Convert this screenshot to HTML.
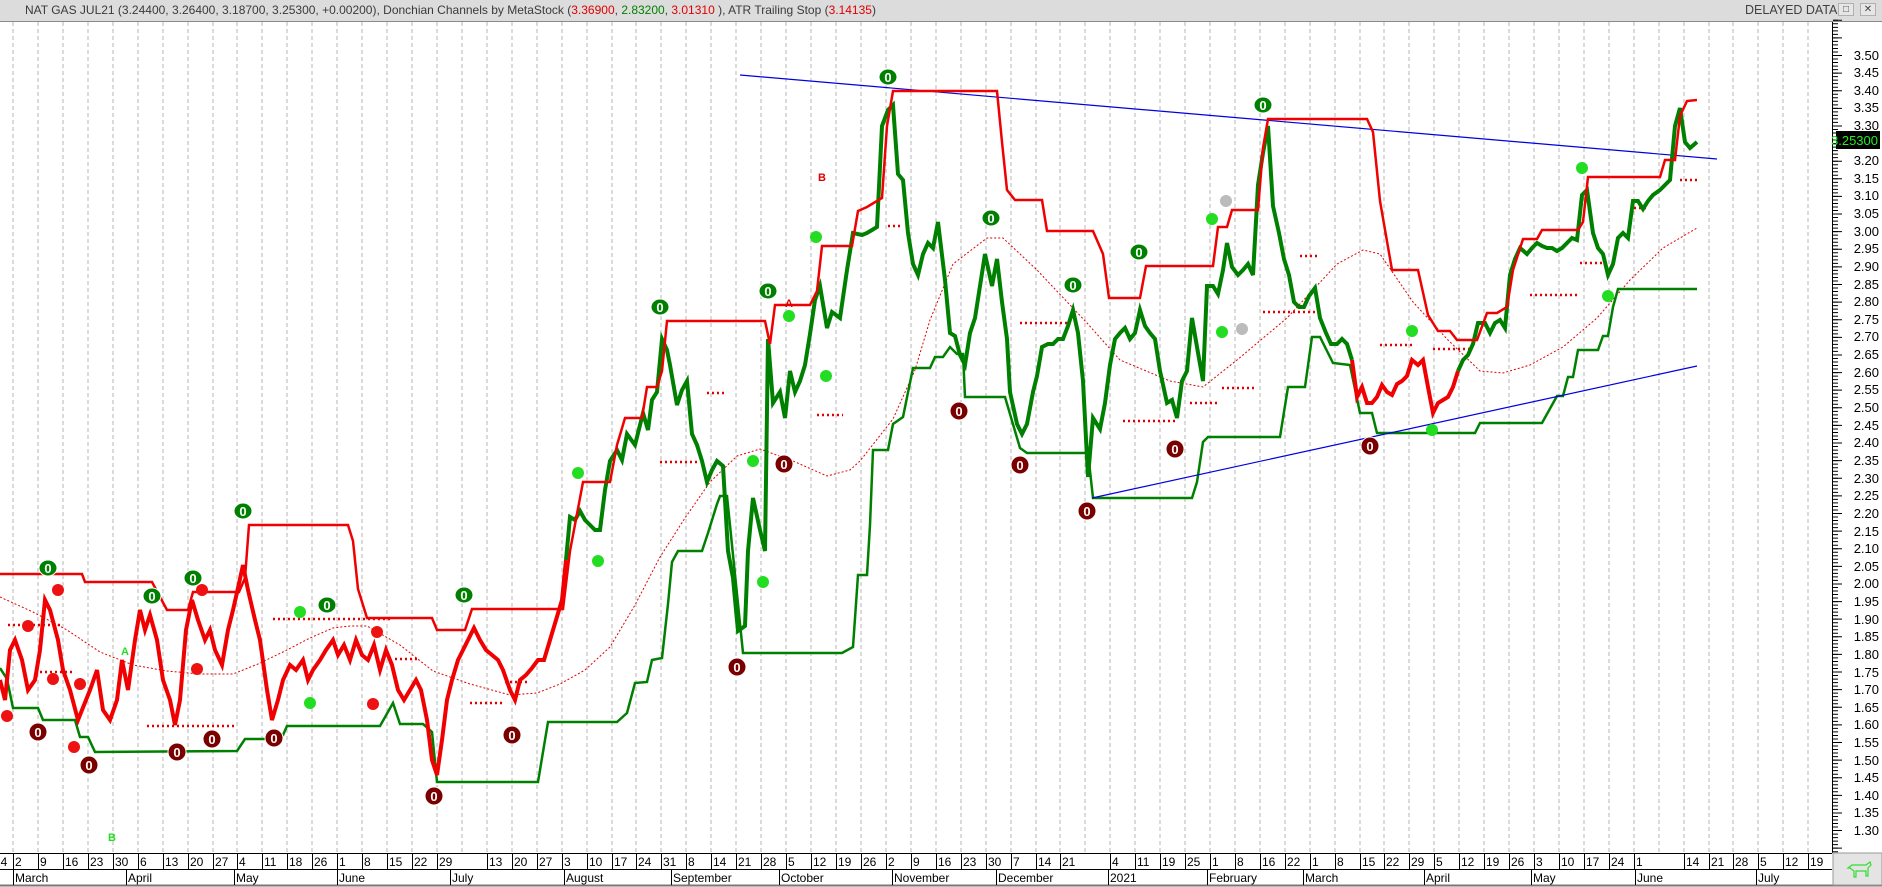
<!DOCTYPE html>
<html><head><meta charset="utf-8"><style>
html,body{margin:0;padding:0;background:#fff;}
body{width:1882px;height:887px;overflow:hidden;position:relative;font-family:"Liberation Sans",sans-serif;}
#hdr{position:absolute;left:0;top:0;width:1882px;height:21px;background:#dcdcdc;border-bottom:1px solid #8a8a8a;font-size:12px;color:#3a3a3a;line-height:20px;}
#hdr .t{position:absolute;left:25px;top:0;white-space:nowrap;}
.r{color:#e00000}.g{color:#008000}
#dd{position:absolute;left:1745px;top:0;font-size:12.5px;color:#404040;}
.btn{position:absolute;top:3px;width:16px;height:13px;background:#e6e6e6;border:1px solid #b0b0b0;box-sizing:border-box;font-size:10px;line-height:11px;text-align:center;color:#444;}
svg{position:absolute;left:0;top:0;}
</style></head><body>
<div id="hdr"><div class="t">NAT GAS JUL21 (3.24400, 3.26400, 3.18700, 3.25300, +0.00200), Donchian Channels by MetaStock (<span class="r">3.36900</span>, <span class="g">2.83200</span>, <span class="r">3.01310</span> ), ATR Trailing Stop (<span class="r">3.14135</span>)</div>
<div id="dd">DELAYED DATA</div>
<div class="btn" style="left:1838px">&#9633;</div><div class="btn" style="left:1860px">&#10005;</div>
</div>
<svg width="1882" height="887" viewBox="0 0 1882 887" style="top:0">
<g stroke="#b4b4b4" stroke-width="1" stroke-dasharray="4,3">
<line x1="13" y1="22" x2="13" y2="853"/><line x1="38" y1="22" x2="38" y2="853"/><line x1="63" y1="22" x2="63" y2="853"/><line x1="88" y1="22" x2="88" y2="853"/><line x1="113" y1="22" x2="113" y2="853"/><line x1="138" y1="22" x2="138" y2="853"/><line x1="163" y1="22" x2="163" y2="853"/><line x1="188" y1="22" x2="188" y2="853"/><line x1="213" y1="22" x2="213" y2="853"/><line x1="237" y1="22" x2="237" y2="853"/><line x1="262" y1="22" x2="262" y2="853"/><line x1="287" y1="22" x2="287" y2="853"/><line x1="312" y1="22" x2="312" y2="853"/><line x1="337" y1="22" x2="337" y2="853"/><line x1="362" y1="22" x2="362" y2="853"/><line x1="387" y1="22" x2="387" y2="853"/><line x1="412" y1="22" x2="412" y2="853"/><line x1="437" y1="22" x2="437" y2="853"/><line x1="462" y1="22" x2="462" y2="853"/><line x1="487" y1="22" x2="487" y2="853"/><line x1="512" y1="22" x2="512" y2="853"/><line x1="537" y1="22" x2="537" y2="853"/><line x1="562" y1="22" x2="562" y2="853"/><line x1="587" y1="22" x2="587" y2="853"/><line x1="612" y1="22" x2="612" y2="853"/><line x1="636" y1="22" x2="636" y2="853"/><line x1="661" y1="22" x2="661" y2="853"/><line x1="686" y1="22" x2="686" y2="853"/><line x1="711" y1="22" x2="711" y2="853"/><line x1="736" y1="22" x2="736" y2="853"/><line x1="761" y1="22" x2="761" y2="853"/><line x1="786" y1="22" x2="786" y2="853"/><line x1="811" y1="22" x2="811" y2="853"/><line x1="836" y1="22" x2="836" y2="853"/><line x1="861" y1="22" x2="861" y2="853"/><line x1="886" y1="22" x2="886" y2="853"/><line x1="911" y1="22" x2="911" y2="853"/><line x1="936" y1="22" x2="936" y2="853"/><line x1="961" y1="22" x2="961" y2="853"/><line x1="986" y1="22" x2="986" y2="853"/><line x1="1011" y1="22" x2="1011" y2="853"/><line x1="1036" y1="22" x2="1036" y2="853"/><line x1="1060" y1="22" x2="1060" y2="853"/><line x1="1085" y1="22" x2="1085" y2="853"/><line x1="1110" y1="22" x2="1110" y2="853"/><line x1="1135" y1="22" x2="1135" y2="853"/><line x1="1160" y1="22" x2="1160" y2="853"/><line x1="1185" y1="22" x2="1185" y2="853"/><line x1="1210" y1="22" x2="1210" y2="853"/><line x1="1235" y1="22" x2="1235" y2="853"/><line x1="1260" y1="22" x2="1260" y2="853"/><line x1="1285" y1="22" x2="1285" y2="853"/><line x1="1310" y1="22" x2="1310" y2="853"/><line x1="1335" y1="22" x2="1335" y2="853"/><line x1="1360" y1="22" x2="1360" y2="853"/><line x1="1384" y1="22" x2="1384" y2="853"/><line x1="1409" y1="22" x2="1409" y2="853"/><line x1="1434" y1="22" x2="1434" y2="853"/><line x1="1459" y1="22" x2="1459" y2="853"/><line x1="1484" y1="22" x2="1484" y2="853"/><line x1="1509" y1="22" x2="1509" y2="853"/><line x1="1534" y1="22" x2="1534" y2="853"/><line x1="1559" y1="22" x2="1559" y2="853"/><line x1="1584" y1="22" x2="1584" y2="853"/><line x1="1609" y1="22" x2="1609" y2="853"/><line x1="1634" y1="22" x2="1634" y2="853"/><line x1="1659" y1="22" x2="1659" y2="853"/><line x1="1684" y1="22" x2="1684" y2="853"/><line x1="1709" y1="22" x2="1709" y2="853"/><line x1="1733" y1="22" x2="1733" y2="853"/><line x1="1758" y1="22" x2="1758" y2="853"/><line x1="1783" y1="22" x2="1783" y2="853"/><line x1="1808" y1="22" x2="1808" y2="853"/>
</g>
<polyline fill="none" stroke="#e00000" stroke-width="1" stroke-dasharray="2,2" points="0,597 33,612 67,630 100,652 133,665 167,671 200,674 233,674 258,664 283,652 310,638 333,628 350,626 367,626 400,645 433,671 470,684 510,695 537,693 560,684 585,670 610,647 635,605 660,557 685,518 710,482 737,456 760,449 793,461 827,476 850,470 860,461 893,419 915,370 930,320 953,264 987,238 1003,238 1037,270 1087,323 1120,360 1170,381 1203,387 1237,360 1287,318 1337,264 1363,250 1380,254 1413,302 1447,339 1480,371 1503,373 1530,365 1563,347 1597,318 1630,280 1663,248 1697,228"/>
<g stroke="#e00000" stroke-width="2.5" stroke-dasharray="2,3">
<line x1="147" y1="726" x2="237" y2="726"/><line x1="273" y1="619" x2="390" y2="619"/><line x1="8" y1="625" x2="60" y2="625"/><line x1="40" y1="672" x2="75" y2="672"/><line x1="395" y1="659" x2="420" y2="659"/><line x1="470" y1="703" x2="505" y2="703"/><line x1="505" y1="682" x2="530" y2="682"/><line x1="660" y1="462" x2="698" y2="462"/><line x1="817" y1="415" x2="843" y2="415"/><line x1="707" y1="393" x2="725" y2="393"/><line x1="888" y1="226" x2="900" y2="226"/><line x1="1020" y1="323" x2="1070" y2="323"/><line x1="1123" y1="421" x2="1177" y2="421"/><line x1="1190" y1="403" x2="1220" y2="403"/><line x1="1222" y1="388" x2="1255" y2="388"/><line x1="1263" y1="312" x2="1317" y2="312"/><line x1="1300" y1="256" x2="1320" y2="256"/><line x1="1380" y1="345" x2="1413" y2="345"/><line x1="1433" y1="349" x2="1470" y2="349"/><line x1="1530" y1="295" x2="1580" y2="295"/><line x1="1580" y1="263" x2="1603" y2="263"/><line x1="1680" y1="180" x2="1698" y2="180"/><line x1="1634" y1="208" x2="1648" y2="208"/>
</g>
<polyline fill="none" stroke="#008000" stroke-width="2.5" points="0,668 7,679 13,708 38,708 43,720 75,720 80,737 88,737 95,752 237,751 245,739 267,739 283,735 287,726 380,726 393,703 400,724 423,724 432,732 437,782 538,782 548,722 617,722 627,713 635,683 647,682 652,660 662,658 668,604 672,562 678,551 702,551 708,533 717,504 720,496 727,496 743,653 842,653 853,647 858,575 867,575 870,525 873,450 888,450 893,424 903,417 913,368 930,368 935,357 943,357 950,347 957,354 963,354 965,397 1005,397 1020,448 1027,453 1088,453 1093,498 1192,498 1197,482 1203,442 1208,437 1280,437 1288,387 1305,387 1312,337 1320,337 1333,363 1350,365 1360,413 1372,413 1377,433 1475,433 1480,423 1542,423 1557,396 1563,396 1568,377 1573,377 1578,350 1598,350 1603,336 1608,336 1613,307 1618,289 1697,289"/>
<line x1="740" y1="75" x2="1717" y2="159" stroke="#0000e0" stroke-width="1.2"/>
<line x1="1092" y1="498" x2="1697" y2="366" stroke="#0000e0" stroke-width="1.2"/>
<polyline fill="none" stroke="#f00000" stroke-width="4" points="0,680 5,700 10,650 15,640 22,660 28,690 35,680 40,650 45,600 50,610 58,640 63,670 70,690 78,720 84,705 90,690 97,670 103,710 110,720 117,700 122,660 128,690 135,640 140,610 145,630 150,615 157,640 163,680 170,700 175,725 180,700 186,630 192,600 198,620 205,640 210,630 215,650 222,665 228,630 233,610 238,588 243,565 248,590 255,620 260,640 267,690 272,720 278,700 283,680 290,665 296,670 303,660 308,680 313,670 320,660 326,650 333,640 338,655 344,645 350,660 356,640 362,655 368,660 374,645 380,670 386,650 392,665 398,690 404,700 410,690 416,680 421,690 427,720 432,760 437,775 442,740 447,700 452,680 458,660 463,650 468,640 474,628 480,640 486,650 492,655 498,660 503,670 510,690 515,700 520,680 526,675 532,668 538,660 544,660 550,640 556,620 562,600 566,560"/>
<polyline fill="none" stroke="#008000" stroke-width="4" points="566,560 570,517 575,520 580,511 585,520 590,525 595,530 600,530 605,490 610,461 617,450 622,460 627,434 635,445 643,413 648,430 652,400 657,392 662,339 667,350 670,365 677,405 682,390 687,381 692,434 697,445 702,461 707,482 712,470 717,461 723,466 728,551 733,578 738,631 745,626 748,551 753,498 760,530 765,551 768,339 773,403 780,392 785,418 790,371 795,392 800,381 805,365 810,334 815,300 820,286 827,328 832,312 840,318 847,270 853,233 862,235 867,233 872,230 877,227 882,126 888,110 893,105 898,174 903,180 908,233 913,264 918,275 923,254 928,243 933,248 938,222 945,280 950,333 955,336 960,355 965,365 970,333 975,318 980,286 985,254 992,286 997,259 1002,302 1007,339 1010,392 1017,424 1022,434 1027,424 1033,392 1037,376 1042,347 1048,344 1053,344 1058,339 1063,339 1068,326 1073,310 1078,333 1083,381 1088,477 1093,418 1100,429 1105,403 1110,365 1115,339 1120,333 1125,328 1130,339 1135,333 1140,310 1145,326 1150,333 1155,339 1160,371 1167,403 1172,400 1177,418 1182,381 1187,371 1192,318 1197,347 1203,381 1207,286 1213,286 1218,294 1223,270 1227,243 1232,267 1238,275 1243,270 1248,264 1253,275 1258,185 1263,153 1268,126 1273,206 1279,233 1284,259 1289,275 1294,302 1299,307 1304,307 1309,296 1315,288 1320,318 1326,333 1331,344 1337,344 1342,339 1347,344 1352,360"/>
<polyline fill="none" stroke="#f00000" stroke-width="4" points="1352,360 1357,397 1362,387 1367,403 1372,403 1377,397 1382,385 1387,392 1392,395 1397,384 1402,381 1407,376 1412,360 1418,365 1423,360 1428,387 1433,413 1438,403 1443,400 1448,397 1453,387 1458,371"/>
<polyline fill="none" stroke="#008000" stroke-width="4" points="1458,371 1463,360 1468,355 1473,344 1478,323 1485,323 1490,333 1495,323 1500,320 1505,328 1510,275 1515,259 1520,248 1527,254 1532,248 1537,243 1542,246 1547,248 1552,248 1557,251 1562,248 1567,243 1572,238 1577,240 1582,195 1587,190 1593,233 1598,248 1603,254 1608,275 1613,264 1618,238 1623,233 1628,238 1633,201 1638,201 1643,209 1648,201 1653,195 1660,190 1665,185 1670,180 1675,126 1680,108 1685,142 1690,148 1697,142"/>
<polyline fill="none" stroke="#f00000" stroke-width="2.5" points="0,574 82,574 85,582 152,582 167,610 188,610 193,592 239,592 245,578 249,525 348,525 353,541 358,589 367,618 432,618 437,630 465,630 472,609 563,609 570,551 577,514 583,482 610,482 617,445 625,418 642,418 647,387 657,387 662,371 667,321 765,321 770,344 775,305 810,305 817,291 822,246 852,246 858,211 867,207 882,198 887,126 893,91 997,91 1002,142 1007,190 1015,200 1042,200 1047,231 1093,231 1103,254 1109,298 1140,298 1146,266 1213,266 1218,227 1227,227 1232,210 1258,210 1263,148 1268,119 1367,119 1373,132 1380,201 1392,270 1418,270 1428,315 1438,331 1450,331 1457,340 1477,340 1487,313 1497,313 1507,307 1513,270 1523,239 1537,239 1542,230 1578,230 1583,222 1588,177 1660,177 1665,160 1675,160 1680,116 1687,101 1697,100"/>
<g font-family="Liberation Sans,sans-serif" font-weight="bold" font-size="13" text-anchor="middle">
<g fill="#008000" stroke="#fff" stroke-width="1">
<ellipse cx="48" cy="568" rx="9" ry="8"/><ellipse cx="152" cy="596" rx="9" ry="8"/><ellipse cx="193" cy="578" rx="9" ry="8"/><ellipse cx="243" cy="511" rx="9" ry="8"/><ellipse cx="327" cy="605" rx="9" ry="8"/><ellipse cx="464" cy="595" rx="9" ry="8"/><ellipse cx="660" cy="307" rx="9" ry="8"/><ellipse cx="768" cy="291" rx="9" ry="8"/><ellipse cx="888" cy="77" rx="9" ry="8"/><ellipse cx="991" cy="218" rx="9" ry="8"/><ellipse cx="1139" cy="252" rx="9" ry="8"/><ellipse cx="1073" cy="285" rx="9" ry="8"/><ellipse cx="1263" cy="105" rx="9" ry="8"/>
</g>
<g fill="#fff"><text x="48" y="573">0</text><text x="152" y="601">0</text><text x="193" y="583">0</text><text x="243" y="516">0</text><text x="327" y="610">0</text><text x="464" y="600">0</text><text x="660" y="312">0</text><text x="768" y="296">0</text><text x="888" y="82">0</text><text x="991" y="223">0</text><text x="1139" y="257">0</text><text x="1073" y="290">0</text><text x="1263" y="110">0</text></g>
<g fill="#7a0000" stroke="#fff" stroke-width="1">
<ellipse cx="38" cy="732" rx="9" ry="9"/><ellipse cx="89" cy="765" rx="9" ry="9"/><ellipse cx="177" cy="752" rx="9" ry="9"/><ellipse cx="212" cy="739" rx="9" ry="9"/><ellipse cx="274" cy="738" rx="9" ry="9"/><ellipse cx="434" cy="796" rx="9" ry="9"/><ellipse cx="512" cy="735" rx="9" ry="9"/><ellipse cx="737" cy="667" rx="9" ry="9"/><ellipse cx="784" cy="464" rx="9" ry="9"/><ellipse cx="959" cy="411" rx="9" ry="9"/><ellipse cx="1020" cy="465" rx="9" ry="9"/><ellipse cx="1087" cy="511" rx="9" ry="9"/><ellipse cx="1175" cy="449" rx="9" ry="9"/><ellipse cx="1370" cy="446" rx="9" ry="9"/>
</g>
<g fill="#fff"><text x="38" y="737">0</text><text x="89" y="770">0</text><text x="177" y="757">0</text><text x="212" y="744">0</text><text x="274" y="743">0</text><text x="434" y="801">0</text><text x="512" y="740">0</text><text x="737" y="672">0</text><text x="784" y="469">0</text><text x="959" y="416">0</text><text x="1020" y="470">0</text><text x="1087" y="516">0</text><text x="1175" y="454">0</text><text x="1370" y="451">0</text></g>
<g fill="#22dd22"><circle cx="300" cy="612" r="6"/><circle cx="310" cy="703" r="6"/><circle cx="578" cy="473" r="6"/><circle cx="598" cy="561" r="6"/><circle cx="789" cy="316" r="6"/><circle cx="816" cy="237" r="6"/><circle cx="826" cy="376" r="6"/><circle cx="753" cy="461" r="6"/><circle cx="763" cy="582" r="6"/><circle cx="1212" cy="219" r="6"/><circle cx="1222" cy="332" r="6"/><circle cx="1412" cy="331" r="6"/><circle cx="1432" cy="430" r="6"/><circle cx="1582" cy="168" r="6"/><circle cx="1608" cy="296" r="6"/></g>
<g fill="#ee1111"><circle cx="7" cy="716" r="6"/><circle cx="58" cy="590" r="6"/><circle cx="53" cy="679" r="6"/><circle cx="28" cy="626" r="6"/><circle cx="74" cy="747" r="6"/><circle cx="80" cy="684" r="6"/><circle cx="202" cy="590" r="6"/><circle cx="197" cy="669" r="6"/><circle cx="373" cy="704" r="6"/><circle cx="377" cy="632" r="6"/></g>
<g fill="#bbbbbb"><circle cx="1226" cy="201" r="6"/><circle cx="1242" cy="329" r="6"/></g>
</g>
<g font-family="Liberation Sans,sans-serif" font-size="11" font-weight="bold">
<text x="108" y="841" fill="#22dd22">B</text><text x="121" y="655" fill="#22dd22">A</text><text x="818" y="181" fill="#e00000">B</text><text x="785" y="307" fill="#e00000">A</text>
</g>
<line x1="1832.5" y1="22" x2="1832.5" y2="853" stroke="#000" stroke-width="1"/>
<line x1="1835.5" y1="19.77" x2="1835.5" y2="853" stroke="#000" stroke-width="5" stroke-dasharray="1,2.523"/>
<line x1="1837.5" y1="19.77" x2="1837.5" y2="853" stroke="#000" stroke-width="9" stroke-dasharray="1,16.615"/>
<g font-family="Liberation Sans,sans-serif" font-size="13" fill="#000" text-anchor="end">
<text x="1879" y="60">3.50</text><text x="1879" y="77">3.45</text><text x="1879" y="95">3.40</text><text x="1879" y="112">3.35</text><text x="1879" y="130">3.30</text><text x="1879" y="165">3.20</text><text x="1879" y="183">3.15</text><text x="1879" y="200">3.10</text><text x="1879" y="218">3.05</text><text x="1879" y="236">3.00</text><text x="1879" y="253">2.95</text><text x="1879" y="271">2.90</text><text x="1879" y="289">2.85</text><text x="1879" y="306">2.80</text><text x="1879" y="324">2.75</text><text x="1879" y="341">2.70</text><text x="1879" y="359">2.65</text><text x="1879" y="377">2.60</text><text x="1879" y="394">2.55</text><text x="1879" y="412">2.50</text><text x="1879" y="430">2.45</text><text x="1879" y="447">2.40</text><text x="1879" y="465">2.35</text><text x="1879" y="483">2.30</text><text x="1879" y="500">2.25</text><text x="1879" y="518">2.20</text><text x="1879" y="536">2.15</text><text x="1879" y="553">2.10</text><text x="1879" y="571">2.05</text><text x="1879" y="588">2.00</text><text x="1879" y="606">1.95</text><text x="1879" y="624">1.90</text><text x="1879" y="641">1.85</text><text x="1879" y="659">1.80</text><text x="1879" y="677">1.75</text><text x="1879" y="694">1.70</text><text x="1879" y="712">1.65</text><text x="1879" y="729">1.60</text><text x="1879" y="747">1.55</text><text x="1879" y="765">1.50</text><text x="1879" y="782">1.45</text><text x="1879" y="800">1.40</text><text x="1879" y="817">1.35</text><text x="1879" y="835">1.30</text>
</g>
<rect x="1836" y="131" width="44" height="18" fill="#000"/>
<text x="1878" y="145" font-family="Liberation Sans,sans-serif" font-size="13" fill="#22ee22" text-anchor="end">3.25300</text>
<rect x="0" y="853" width="1832" height="33" fill="#fff"/>
<line x1="0" y1="853.5" x2="1832" y2="853.5" stroke="#000"/>
<line x1="0" y1="869.5" x2="1832" y2="869.5" stroke="#000"/>
<line x1="0" y1="885.5" x2="1882" y2="885.5" stroke="#777" stroke-width="2"/>
<g stroke="#000" stroke-width="1">
<line x1="13.5" y1="853" x2="13.5" y2="869"/><line x1="38.5" y1="853" x2="38.5" y2="869"/><line x1="63.5" y1="853" x2="63.5" y2="869"/><line x1="88.5" y1="853" x2="88.5" y2="869"/><line x1="113.5" y1="853" x2="113.5" y2="869"/><line x1="138.5" y1="853" x2="138.5" y2="869"/><line x1="163.5" y1="853" x2="163.5" y2="869"/><line x1="188.5" y1="853" x2="188.5" y2="869"/><line x1="213.5" y1="853" x2="213.5" y2="869"/><line x1="237.5" y1="853" x2="237.5" y2="869"/><line x1="262.5" y1="853" x2="262.5" y2="869"/><line x1="287.5" y1="853" x2="287.5" y2="869"/><line x1="312.5" y1="853" x2="312.5" y2="869"/><line x1="337.5" y1="853" x2="337.5" y2="869"/><line x1="362.5" y1="853" x2="362.5" y2="869"/><line x1="387.5" y1="853" x2="387.5" y2="869"/><line x1="412.5" y1="853" x2="412.5" y2="869"/><line x1="437.5" y1="853" x2="437.5" y2="869"/><line x1="487.5" y1="853" x2="487.5" y2="869"/><line x1="512.5" y1="853" x2="512.5" y2="869"/><line x1="537.5" y1="853" x2="537.5" y2="869"/><line x1="562.5" y1="853" x2="562.5" y2="869"/><line x1="587.5" y1="853" x2="587.5" y2="869"/><line x1="612.5" y1="853" x2="612.5" y2="869"/><line x1="636.5" y1="853" x2="636.5" y2="869"/><line x1="661.5" y1="853" x2="661.5" y2="869"/><line x1="686.5" y1="853" x2="686.5" y2="869"/><line x1="711.5" y1="853" x2="711.5" y2="869"/><line x1="736.5" y1="853" x2="736.5" y2="869"/><line x1="761.5" y1="853" x2="761.5" y2="869"/><line x1="786.5" y1="853" x2="786.5" y2="869"/><line x1="811.5" y1="853" x2="811.5" y2="869"/><line x1="836.5" y1="853" x2="836.5" y2="869"/><line x1="861.5" y1="853" x2="861.5" y2="869"/><line x1="886.5" y1="853" x2="886.5" y2="869"/><line x1="911.5" y1="853" x2="911.5" y2="869"/><line x1="936.5" y1="853" x2="936.5" y2="869"/><line x1="961.5" y1="853" x2="961.5" y2="869"/><line x1="986.5" y1="853" x2="986.5" y2="869"/><line x1="1011.5" y1="853" x2="1011.5" y2="869"/><line x1="1036.5" y1="853" x2="1036.5" y2="869"/><line x1="1060.5" y1="853" x2="1060.5" y2="869"/><line x1="1110.5" y1="853" x2="1110.5" y2="869"/><line x1="1135.5" y1="853" x2="1135.5" y2="869"/><line x1="1160.5" y1="853" x2="1160.5" y2="869"/><line x1="1185.5" y1="853" x2="1185.5" y2="869"/><line x1="1210.5" y1="853" x2="1210.5" y2="869"/><line x1="1235.5" y1="853" x2="1235.5" y2="869"/><line x1="1260.5" y1="853" x2="1260.5" y2="869"/><line x1="1285.5" y1="853" x2="1285.5" y2="869"/><line x1="1310.5" y1="853" x2="1310.5" y2="869"/><line x1="1335.5" y1="853" x2="1335.5" y2="869"/><line x1="1360.5" y1="853" x2="1360.5" y2="869"/><line x1="1384.5" y1="853" x2="1384.5" y2="869"/><line x1="1409.5" y1="853" x2="1409.5" y2="869"/><line x1="1434.5" y1="853" x2="1434.5" y2="869"/><line x1="1459.5" y1="853" x2="1459.5" y2="869"/><line x1="1484.5" y1="853" x2="1484.5" y2="869"/><line x1="1509.5" y1="853" x2="1509.5" y2="869"/><line x1="1534.5" y1="853" x2="1534.5" y2="869"/><line x1="1559.5" y1="853" x2="1559.5" y2="869"/><line x1="1584.5" y1="853" x2="1584.5" y2="869"/><line x1="1609.5" y1="853" x2="1609.5" y2="869"/><line x1="1634.5" y1="853" x2="1634.5" y2="869"/><line x1="1684.5" y1="853" x2="1684.5" y2="869"/><line x1="1709.5" y1="853" x2="1709.5" y2="869"/><line x1="1733.5" y1="853" x2="1733.5" y2="869"/><line x1="1758.5" y1="853" x2="1758.5" y2="869"/><line x1="1783.5" y1="853" x2="1783.5" y2="869"/><line x1="1808.5" y1="853" x2="1808.5" y2="869"/>
<line x1="13.5" y1="869" x2="13.5" y2="885"/><line x1="126.5" y1="869" x2="126.5" y2="885"/><line x1="234.5" y1="869" x2="234.5" y2="885"/><line x1="337.5" y1="869" x2="337.5" y2="885"/><line x1="450.5" y1="869" x2="450.5" y2="885"/><line x1="564.5" y1="869" x2="564.5" y2="885"/><line x1="671.5" y1="869" x2="671.5" y2="885"/><line x1="779.5" y1="869" x2="779.5" y2="885"/><line x1="892.5" y1="869" x2="892.5" y2="885"/><line x1="996.5" y1="869" x2="996.5" y2="885"/><line x1="1108.5" y1="869" x2="1108.5" y2="885"/><line x1="1207.5" y1="869" x2="1207.5" y2="885"/><line x1="1303.5" y1="869" x2="1303.5" y2="885"/><line x1="1424.5" y1="869" x2="1424.5" y2="885"/><line x1="1531.5" y1="869" x2="1531.5" y2="885"/><line x1="1635.5" y1="869" x2="1635.5" y2="885"/><line x1="1756.5" y1="869" x2="1756.5" y2="885"/>
</g>
<g font-family="Liberation Sans,sans-serif" font-size="12" fill="#000">
<text x="-6" y="866">24</text><text x="15" y="866">2</text><text x="40" y="866">9</text><text x="65" y="866">16</text><text x="90" y="866">23</text><text x="115" y="866">30</text><text x="140" y="866">6</text><text x="165" y="866">13</text><text x="190" y="866">20</text><text x="215" y="866">27</text><text x="239" y="866">4</text><text x="264" y="866">11</text><text x="289" y="866">18</text><text x="314" y="866">26</text><text x="339" y="866">1</text><text x="364" y="866">8</text><text x="389" y="866">15</text><text x="414" y="866">22</text><text x="439" y="866">29</text><text x="489" y="866">13</text><text x="514" y="866">20</text><text x="539" y="866">27</text><text x="564" y="866">3</text><text x="589" y="866">10</text><text x="614" y="866">17</text><text x="638" y="866">24</text><text x="663" y="866">31</text><text x="688" y="866">8</text><text x="713" y="866">14</text><text x="738" y="866">21</text><text x="763" y="866">28</text><text x="788" y="866">5</text><text x="813" y="866">12</text><text x="838" y="866">19</text><text x="863" y="866">26</text><text x="888" y="866">2</text><text x="913" y="866">9</text><text x="938" y="866">16</text><text x="963" y="866">23</text><text x="988" y="866">30</text><text x="1013" y="866">7</text><text x="1038" y="866">14</text><text x="1062" y="866">21</text><text x="1112" y="866">4</text><text x="1137" y="866">11</text><text x="1162" y="866">19</text><text x="1187" y="866">25</text><text x="1212" y="866">1</text><text x="1237" y="866">8</text><text x="1262" y="866">16</text><text x="1287" y="866">22</text><text x="1312" y="866">1</text><text x="1337" y="866">8</text><text x="1362" y="866">15</text><text x="1386" y="866">22</text><text x="1411" y="866">29</text><text x="1436" y="866">5</text><text x="1461" y="866">12</text><text x="1486" y="866">19</text><text x="1511" y="866">26</text><text x="1536" y="866">3</text><text x="1561" y="866">10</text><text x="1586" y="866">17</text><text x="1611" y="866">24</text><text x="1636" y="866">1</text><text x="1686" y="866">14</text><text x="1711" y="866">21</text><text x="1735" y="866">28</text><text x="1760" y="866">5</text><text x="1785" y="866">12</text><text x="1810" y="866">19</text>
<text x="15" y="882">March</text><text x="128" y="882">April</text><text x="236" y="882">May</text><text x="339" y="882">June</text><text x="452" y="882">July</text><text x="566" y="882">August</text><text x="673" y="882">September</text><text x="781" y="882">October</text><text x="894" y="882">November</text><text x="998" y="882">December</text><text x="1110" y="882">2021</text><text x="1209" y="882">February</text><text x="1305" y="882">March</text><text x="1426" y="882">April</text><text x="1533" y="882">May</text><text x="1637" y="882">June</text><text x="1758" y="882">July</text>
</g>
<rect x="1833" y="853" width="49" height="32" fill="#e4e4e4" stroke="#999"/>
<path d="M1848,868 l4,-3 l14,0 l4,-3 l1,3 l-3,3 l0,8 l-2,0 l0,-5 l-10,0 l0,6 l-2,0 l0,-6 l-4,-3 z" fill="none" stroke="#33dd33" stroke-width="1.2"/>
</svg>
</body></html>
